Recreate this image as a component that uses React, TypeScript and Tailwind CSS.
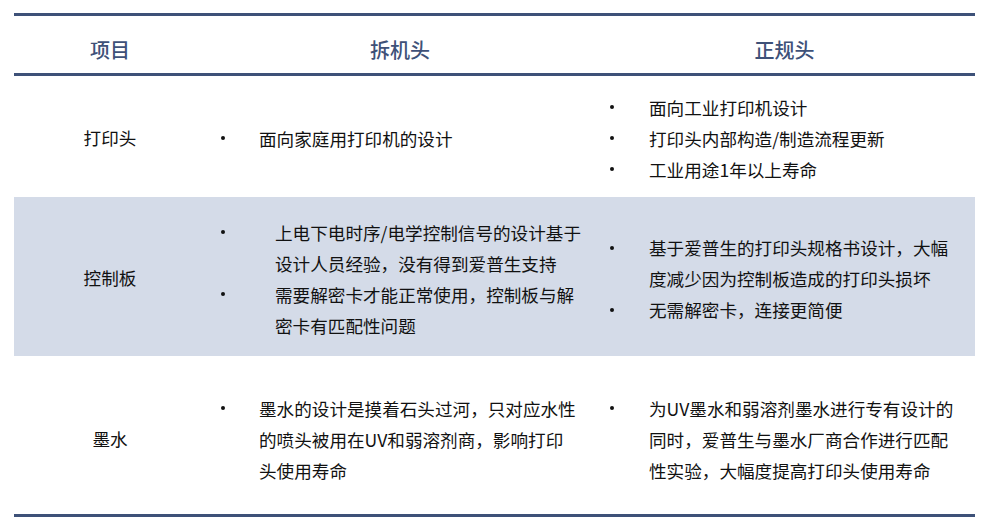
import React from "react";

type Item = { lines: string[] };

const Dot = () => (
  <div className="flex h-[31px] items-center">
    <span className="block h-[4px] w-[4px] rounded-full bg-[#111]" />
  </div>
);

function List({
  items,
  left,
  indent,
}: {
  items: Item[];
  left: number;
  indent: string;
}) {
  return (
    <div className="flex flex-col" style={{ paddingLeft: left }}>
      {items.map((it, i) => (
        <div key={i} className="flex">
          <div className={indent}>
            <Dot />
          </div>
          <div className="flex flex-col">
            {it.lines.map((l, j) => (
              <div key={j} className="whitespace-nowrap leading-[31px]">
                {l}
              </div>
            ))}
          </div>
        </div>
      ))}
    </div>
  );
}

export default function App() {
  const font = {
    fontFamily: '"Noto Sans CJK SC", "Noto Sans", sans-serif',
  } as React.CSSProperties;
  return (
    <div
      className="h-[523px] w-[991px] bg-white px-[14px] pt-[13px] text-[17.6px] text-[#111]"
      style={font}
    >
      <div className="w-[961px]">
        <div className="h-[3px] bg-[#3E5178]" />
        {/* header */}
        <div className="grid h-[57px] grid-cols-[192px_388px_381px] pt-[11px] text-[20px] font-medium text-[#3E5178]">
          <div className="flex items-center justify-center">项目</div>
          <div className="flex items-center justify-center">拆机头</div>
          <div className="flex items-center justify-center">正规头</div>
        </div>
        <div className="h-[3px] bg-[#3E5178]" />
        {/* row 1 */}
        <div className="grid h-[121px] grid-cols-[192px_388px_381px] pt-[3px]">
          <div className="flex items-center justify-center">打印头</div>
          <div className="flex items-center">
            <List left={15} indent="w-[38px]" items={[{ lines: ["面向家庭用打印机的设计"] }]} />
          </div>
          <div className="flex items-center">
            <List
              left={16}
              indent="w-[39px]"
              items={[
                { lines: ["面向工业打印机设计"] },
                { lines: ["打印头内部构造/制造流程更新"] },
                { lines: ["工业用途1年以上寿命"] },
              ]}
            />
          </div>
        </div>
        {/* row 2 */}
        <div className="grid h-[159px] grid-cols-[192px_388px_381px] bg-[#D4DBE8] pt-[4px]">
          <div className="flex items-center justify-center">控制板</div>
          <div className="flex items-center">
            <List
              left={15}
              indent="w-[54px]"
              items={[
                { lines: ["上电下电时序/电学控制信号的设计基于", "设计人员经验，没有得到爱普生支持"] },
                { lines: ["需要解密卡才能正常使用，控制板与解", "密卡有匹配性问题"] },
              ]}
            />
          </div>
          <div className="flex items-center">
            <List
              left={16}
              indent="w-[39px]"
              items={[
                { lines: ["基于爱普生的打印头规格书设计，大幅", "度减少因为控制板造成的打印头损坏"] },
                { lines: ["无需解密卡，连接更简便"] },
              ]}
            />
          </div>
        </div>
        {/* row 3 */}
        <div className="grid h-[158px] grid-cols-[192px_388px_381px] pt-[8px]">
          <div className="flex items-center justify-center">墨水</div>
          <div className="flex items-center">
            <List
              left={15}
              indent="w-[38px]"
              items={[
                {
                  lines: [
                    "墨水的设计是摸着石头过河，只对应水性",
                    "的喷头被用在UV和弱溶剂商，影响打印",
                    "头使用寿命",
                  ],
                },
              ]}
            />
          </div>
          <div className="flex items-center">
            <List
              left={16}
              indent="w-[39px]"
              items={[
                {
                  lines: [
                    "为UV墨水和弱溶剂墨水进行专有设计的",
                    "同时，爱普生与墨水厂商合作进行匹配",
                    "性实验，大幅度提高打印头使用寿命",
                  ],
                },
              ]}
            />
          </div>
        </div>
        <div className="h-[3px] bg-[#3E5178]" />
      </div>
    </div>
  );
}
